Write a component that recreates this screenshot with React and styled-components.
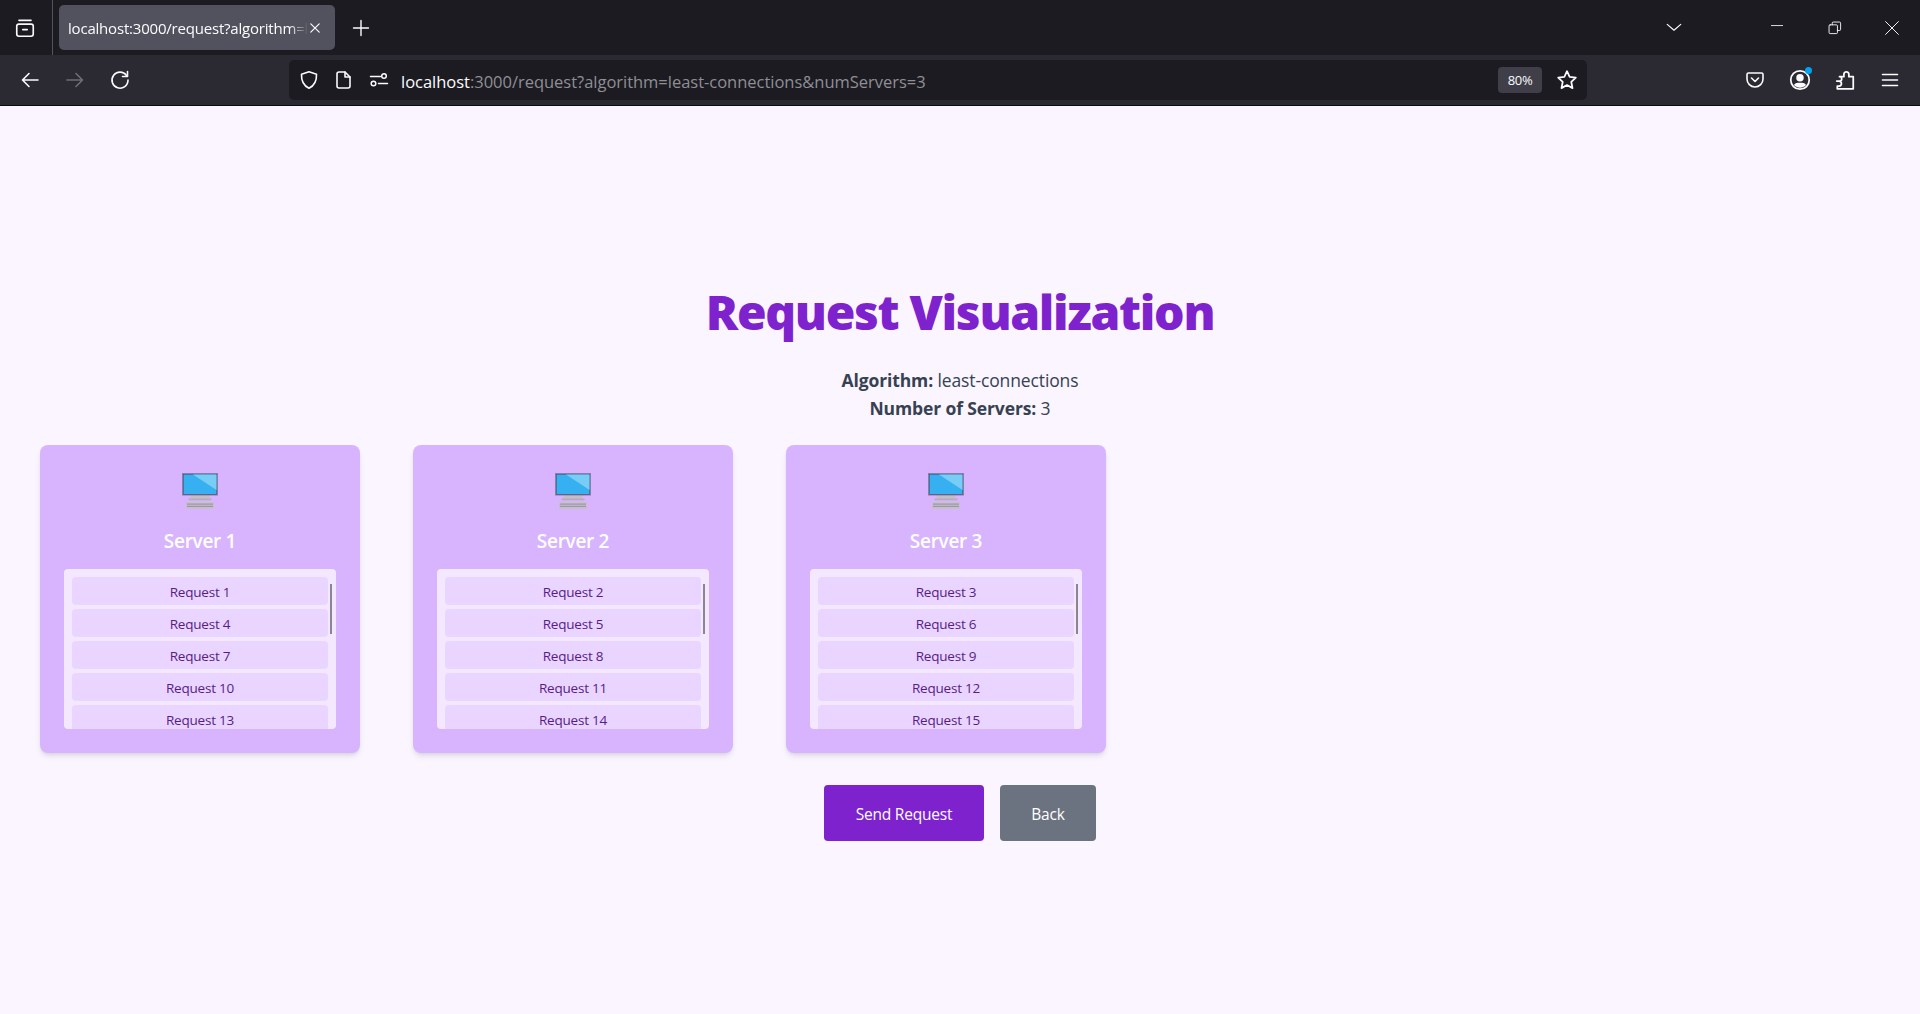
import React from 'react'
import styled, { createGlobalStyle } from 'styled-components'

const GlobalStyle = createGlobalStyle`
    html, body {
        margin: 0;
        padding: 0;
        height: 100%;
        background: #faf5ff;
    }
    body {
        font-family: 'Open Sans', 'Noto Sans', sans-serif;
    }
`

const Browser = styled.div`
    width: 1920px;
    height: 1014px;
    display: flex;
    flex-direction: column;
    overflow: hidden;
`

const TabBar = styled.div`
    height: 55px;
    background: #1c1b22;
    display: flex;
    align-items: flex-start;
    color: #fbfbfe;
`

const TabGroupButton = styled.div`
    width: 53px;
    height: 55px;
    padding-right: 3px;
    box-sizing: border-box;
    border-right: 1px solid #55545c;
    display: flex;
    align-items: center;
    justify-content: center;
`

const Tab = styled.div`
    width: 276px;
    height: 45px;
    margin: 5px 0 0 6px;
    padding: 0 13px 0 9px;
    box-sizing: border-box;
    border-radius: 5px;
    background: #52525e;
    display: flex;
    align-items: center;
`

const TabTitle = styled.span`
    flex: 1;
    overflow: hidden;
    white-space: nowrap;
    font-size: 15px;
    letter-spacing: -0.2px;
    -webkit-mask-image: linear-gradient(to right, #000 92%, transparent 100%);
    mask-image: linear-gradient(to right, #000 92%, transparent 100%);
`

const NewTab = styled.div`
    width: 44px;
    height: 45px;
    margin: 5px 0 0 4px;
    display: flex;
    align-items: center;
    justify-content: center;
`

const WindowControls = styled.div`
    margin-left: auto;
    display: flex;
    align-items: center;
    height: 55px;
`

const ChromeButton = styled.div`
    width: ${(props) => props.$w || 45}px;
    height: ${(props) => props.$h || 40}px;
    color: ${(props) => (props.$muted ? '#6f6e75' : 'inherit')};
    display: flex;
    align-items: center;
    justify-content: center;
    position: relative;
    flex: none;
`

const TabListButton = styled(ChromeButton)`
    margin-right: 51px;
`

const Toolbar = styled.div`
    height: 50px;
    box-sizing: content-box;
    background: #2b2a33;
    border-bottom: 1px solid #0c0c0d;
    display: flex;
    align-items: center;
    padding: 0 7.5px;
    color: #fbfbfe;
`

const UrlBar = styled.div`
    width: 1298px;
    height: 40px;
    margin-left: 146.5px;
    padding-left: 2.5px;
    box-sizing: border-box;
    border-radius: 5px;
    background: #1c1b22;
    display: flex;
    align-items: center;
`

const UrlText = styled.span`
    margin-left: 4.5px;
    padding-top: 2px;
    font-size: 16.5px;
    letter-spacing: -0.02px;
    color: #8f8f94;
    white-space: nowrap;
    b {
        font-weight: 400;
        color: #fbfbfe;
    }
`

const ZoomPill = styled.span`
    margin-left: auto;
    margin-right: 5px;
    width: 44px;
    height: 26px;
    border-radius: 4px;
    background: #3f3e49;
    font-size: 13px;
    letter-spacing: -0.3px;
    display: flex;
    align-items: center;
    justify-content: center;
`

const ToolbarEnd = styled.div`
    margin-left: auto;
    display: flex;
`

const Dot = styled.span`
    position: absolute;
    top: 7px;
    right: 11px;
    width: 7px;
    height: 7px;
    border-radius: 50%;
    background: #00a3f0;
`

const Main = styled.main`
    flex: 1;
    background: #faf5ff;
    padding: 182px 40px 0;
    display: flex;
    flex-direction: column;
    align-items: center;
`

const Title = styled.h1`
    margin: 0;
    font-size: 48px;
    line-height: 48px;
    font-weight: 800;
    letter-spacing: -1.3px;
    color: #7e22ce;
`

const Info = styled.div`
    margin-top: 30px;
    font-size: 17.5px;
    line-height: 28px;
    letter-spacing: -0.12px;
    color: #374151;
    text-align: center;
    b {
        font-weight: 700;
    }
`

const ServerRow = styled.div`
    width: 100%;
    margin-top: 23px;
    display: flex;
    gap: 53px;
`

const ServerCard = styled.section`
    width: 320px;
    height: 308px;
    padding: 24px;
    box-sizing: border-box;
    border-radius: 8px;
    background: #d8b4fe;
    box-shadow: 0 4px 6px -1px rgba(0, 0, 0, 0.1), 0 2px 4px -2px rgba(0, 0, 0, 0.1);
    display: flex;
    flex-direction: column;
    align-items: center;
`

const ServerName = styled.h2`
    margin: 10px 0 14px;
    font-size: 19px;
    line-height: 28px;
    font-weight: 600;
    letter-spacing: -0.3px;
    color: #fff;
`

const RequestBox = styled.div`
    position: relative;
    width: 272px;
    height: 160px;
    box-sizing: border-box;
    padding: 8px;
    border-radius: 4px;
    background: #f3e8ff;
    overflow: hidden;
    display: flex;
    flex-direction: column;
    gap: 4px;
`

const RequestItem = styled.div`
    flex: none;
    height: 28px;
    border-radius: 4px;
    background: #e9d5ff;
    color: #581c87;
    font-size: 13.5px;
    line-height: 30px;
    letter-spacing: -0.2px;
    text-align: center;
`

const ScrollThumb = styled.span`
    position: absolute;
    top: 15px;
    right: 4px;
    width: 2px;
    height: 50px;
    background: #8a8590;
`

const Actions = styled.div`
    margin-top: 32px;
    display: flex;
    gap: 16px;
`

const ActionButton = styled.button`
    width: ${(props) => props.$w}px;
    height: 56px;
    border: 0;
    border-radius: 4px;
    background: ${(props) => props.$bg};
    color: #fff;
    font-family: inherit;
    font-size: 15.5px;
    letter-spacing: -0.2px;
    padding: 2px 0 0;
`

const Ico = ({ size = 20, children, fill = 'none', sw = 1.6 }) => (
    <svg width={size} height={size} viewBox="0 0 20 20" fill={fill} stroke="currentColor" strokeWidth={sw} strokeLinecap="round" strokeLinejoin="round">
        {children}
    </svg>
)

const MonitorIcon = () => (
    <svg width="48" height="48" viewBox="0 0 48 48">
        <rect x="14.5" y="26" width="19" height="4" fill="#c3bcc9" />
        <rect x="12.5" y="29.5" width="23" height="1.8" fill="#b4adba" />
        <rect x="6.5" y="4.5" width="35" height="21.5" fill="#45405c" stroke="#8d7ba8" strokeWidth="1" />
        <rect x="7.5" y="5.5" width="33" height="19.5" fill="#36b0f0" />
        <polygon points="17,5.5 40.5,5.5 40.5,21" fill="#78cdf6" />
        <rect x="10" y="33" width="28" height="7" fill="#c6c0cc" />
        <rect x="11" y="34.5" width="26" height="1.2" fill="#9d97a5" />
        <rect x="11" y="36.8" width="26" height="1.2" fill="#9d97a5" />
    </svg>
)

const servers = [
    [1, 4, 7, 10, 13],
    [2, 5, 8, 11, 14],
    [3, 6, 9, 12, 15],
]

const App = () => {
    return (
        <Browser>
            <GlobalStyle />
            <TabBar>
                <TabGroupButton>
                    <Ico size={22} sw={1.5}>
                        <rect x="2.5" y="6.5" width="15" height="11" rx="2" />
                        <path d="M4.5 3h11M8 11.5h4" />
                    </Ico>
                </TabGroupButton>
                <Tab>
                    <TabTitle>localhost:3000/request?algorithm=least-connections</TabTitle>
                    <Ico size={14} sw={1.7}>
                        <path d="M4 4l12 12M16 4L4 16" />
                    </Ico>
                </Tab>
                <NewTab>
                    <Ico size={20} sw={1.4}>
                        <path d="M10 2.5v15M2.5 10h15" />
                    </Ico>
                </NewTab>
                <WindowControls>
                    <TabListButton $w={46}>
                        <Ico size={18} sw={1.3}>
                            <path d="M2.5 6l7.5 6.5L17.5 6" />
                        </Ico>
                    </TabListButton>
                    <ChromeButton $w={58}>
                        <Ico size={14} sw={1.2}>
                            <path d="M2 6.5h16" />
                        </Ico>
                    </ChromeButton>
                    <ChromeButton $w={57}>
                        <Ico size={14} sw={1.3}>
                            <rect x="1.5" y="5.5" width="12" height="12.5" rx="1.5" />
                            <path d="M6 5.5V3a1.5 1.5 0 0 1 1.5-1.5H16.5A1.5 1.5 0 0 1 18 3v9a1.5 1.5 0 0 1-1.5 1.5h-3" />
                        </Ico>
                    </ChromeButton>
                    <ChromeButton $w={57}>
                        <Ico size={16} sw={1.2}>
                            <path d="M2 2l16 16M18 2L2 18" />
                        </Ico>
                    </ChromeButton>
                </WindowControls>
            </TabBar>
            <Toolbar>
                <ChromeButton>
                    <Ico size={20}>
                        <path d="M18 10H2.5M9 3.5L2.5 10 9 16.5" />
                    </Ico>
                </ChromeButton>
                <ChromeButton $muted>
                    <Ico size={20}>
                        <path d="M2 10h15.5M11 3.5l6.5 6.5-6.5 6.5" />
                    </Ico>
                </ChromeButton>
                <ChromeButton>
                    <Ico size={20}>
                        <path d="M16.5 5.5A8 8 0 1 0 18 10" />
                        <path d="M17.5 1.5v5h-5" />
                    </Ico>
                </ChromeButton>
                <UrlBar>
                    <ChromeButton $w={35}>
                        <Ico size={20}>
                            <path d="M10 1.8l7.5 2.4c.3 6.5-1.8 11.2-7.5 14-5.7-2.8-7.8-7.5-7.5-14z" />
                        </Ico>
                    </ChromeButton>
                    <ChromeButton $w={35}>
                        <Ico size={20}>
                            <path d="M5 2h6l5 5v9a2 2 0 0 1-2 2H5a2 2 0 0 1-2-2V4a2 2 0 0 1 2-2z" />
                            <path d="M11 2v5h5" />
                        </Ico>
                    </ChromeButton>
                    <ChromeButton $w={35}>
                        <Ico size={20} sw={1.5}>
                            <path d="M1.5 6.5h10M9.5 13.5h9" />
                            <circle cx="15" cy="6" r="2.3" />
                            <circle cx="4.5" cy="13.5" r="2.3" />
                        </Ico>
                    </ChromeButton>
                    <UrlText>
                        <b>localhost</b>:3000/request?algorithm=least-connections&amp;numServers=3
                    </UrlText>
                    <ZoomPill>80%</ZoomPill>
                    <ChromeButton $w={40}>
                        <Ico size={22}>
                            <path d="M10 2l2.4 5.2 5.6.7-4.1 3.900 1.100 5.600-5-2.800-5 2.800 1.100-5.600L2 7.900l5.600-.7z" />
                        </Ico>
                    </ChromeButton>
                </UrlBar>
                <ToolbarEnd>
                    <ChromeButton>
                        <Ico size={20}>
                            <path d="M3.5 3h13A1.5 1.5 0 0 1 18 4.5V9a8 8 0 0 1-16 0V4.5A1.5 1.5 0 0 1 3.5 3z" />
                            <path d="M6.5 8l3.5 3.5L13.5 8" />
                        </Ico>
                    </ChromeButton>
                    <ChromeButton>
                        <Ico size={22}>
                            <circle cx="10" cy="10" r="8.4" />
                            <circle cx="10" cy="8" r="2.6" fill="currentColor" />
                            <path d="M4.5 14.5c1-1.800 3-2 5.500-2s4.500.2 5.500 2c-1.500 1.700-3.500 2.500-5.500 2.500s-4-.8-5.500-2.500z" fill="currentColor" stroke="none" />
                        </Ico>
                        <Dot />
                    </ChromeButton>
                    <ChromeButton>
                        <Ico size={22}>
                            <path d="M2.5 11H5a2 2 0 0 0 0-4V7h4V4.5a2.300 2.300 0 0 1 4.500 0V7H17.500v11H3v-2.500h1.500a2.200 2.200 0 0 0 0-4.500z" />
                        </Ico>
                    </ChromeButton>
                    <ChromeButton>
                        <Ico size={20}>
                            <path d="M2.5 4.5h15M2.5 10h15M2.5 15.5h15" />
                        </Ico>
                    </ChromeButton>
                </ToolbarEnd>
            </Toolbar>
            <Main>
                <Title>Request Visualization</Title>
                <Info>
                    <div>
                        <b>Algorithm:</b> least-connections
                    </div>
                    <div>
                        <b>Number of Servers:</b> 3
                    </div>
                </Info>
                <ServerRow>
                    {servers.map((requests, i) => (
                        <ServerCard key={i}>
                            <MonitorIcon />
                            <ServerName>Server {i + 1}</ServerName>
                            <RequestBox>
                                {requests.map((r) => (
                                    <RequestItem key={r}>Request {r}</RequestItem>
                                ))}
                                <ScrollThumb />
                            </RequestBox>
                        </ServerCard>
                    ))}
                </ServerRow>
                <Actions>
                    <ActionButton $w={160} $bg="#7e22ce">
                        Send Request
                    </ActionButton>
                    <ActionButton $w={96} $bg="#6b7280">
                        Back
                    </ActionButton>
                </Actions>
            </Main>
        </Browser>
    )
}

export default App
